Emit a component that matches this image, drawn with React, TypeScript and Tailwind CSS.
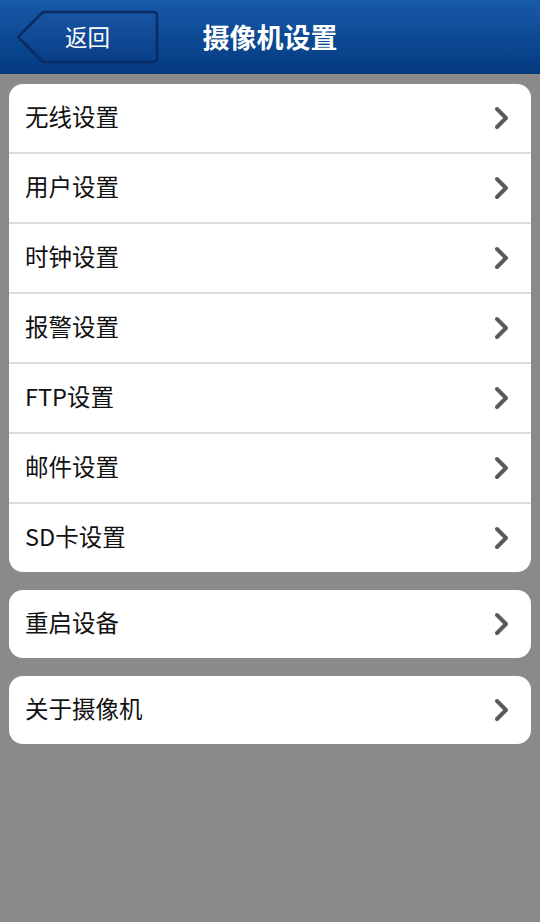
import React from "react";

const font = { fontFamily: '"Noto Sans CJK SC", "Noto Sans", sans-serif' };

function Chevron() {
  return (
    <svg width="18" height="24" viewBox="0 0 18 24" className="shrink-0">
      <path d="M4 3 L13 12 L4 21" fill="none" stroke="#5a5a5a" strokeWidth="4" strokeLinecap="round" strokeLinejoin="round" />
    </svg>
  );
}

function Row({ label, last }: { label: string; last?: boolean }) {
  return (
    <div className={`flex items-center justify-between pl-[16px] pr-[20px] ${last ? "h-[68px]" : "h-[70px] border-b-2 border-[#dcdcdc]"}`}>
      <span className="pb-[3px] text-[23.5px] leading-none text-[#111]">{label}</span>
      <Chevron />
    </div>
  );
}

export default function App() {
  const group1 = ["无线设置", "用户设置", "时钟设置", "报警设置", "FTP设置", "邮件设置", "SD卡设置"];
  return (
    <div className="min-h-[922px] w-[540px] bg-[#8a8a8a]" style={font}>
      <div className="relative flex h-[74px] items-center justify-center bg-gradient-to-b from-[#185aa9] to-[#043a80]">
        <div className="absolute left-[16px] top-[10px] h-[54px] w-[143px]">
          <svg width="143" height="54" viewBox="0 0 143 54" className="absolute inset-0">
            <defs>
              <linearGradient id="bb" x1="0" y1="0" x2="0" y2="1">
                <stop offset="0" stopColor="#1855a3" />
                <stop offset="1" stopColor="#093e86" />
              </linearGradient>
            </defs>
            <path d="M2 27 L27 2 L137 2 Q141 2 141 6 L141 48 Q141 52 137 52 L27 52 Z" fill="url(#bb)" stroke="#0a2b63" strokeWidth="2.5" strokeLinejoin="round" />
          </svg>
          <div className="relative flex h-full items-center justify-center pb-[2px] text-[22.5px] leading-none text-white">返回</div>
        </div>
        <h1 className="pb-[2px] text-[27px] font-bold leading-none text-white">摄像机设置</h1>
      </div>
      <div className="flex flex-col gap-[18px] px-[9px] pt-[10px]">
        <div className="overflow-hidden rounded-[14px] bg-white">
          {group1.map((l, i) => (
            <Row key={l} label={l} last={i === group1.length - 1} />
          ))}
        </div>
        <div className="overflow-hidden rounded-[14px] bg-white">
          <Row label="重启设备" last />
        </div>
        <div className="overflow-hidden rounded-[14px] bg-white">
          <Row label="关于摄像机" last />
        </div>
      </div>
    </div>
  );
}
